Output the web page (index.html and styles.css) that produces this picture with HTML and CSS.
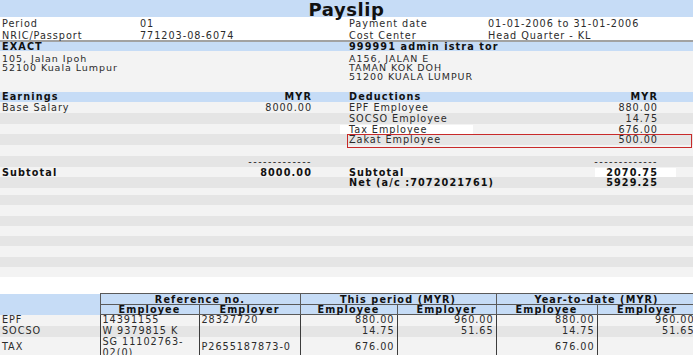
FILE: index.html
```html
<!DOCTYPE html>
<html lang="en">
<head>
<meta charset="utf-8">
<title>Payslip</title>
<link rel="stylesheet" href="styles.css">
</head>
<body>
<div class="slip">
  <div class="title"><span>Payslip</span></div>

  <div class="info">
    <div class="info-row">
      <span>Period</span><span>01</span><span>Payment date</span><span>01-01-2006 to 31-01-2006</span>
    </div>
    <div class="info-row">
      <span>NRIC/Passport</span><span>771203-08-6074</span><span>Cost Center</span><span>Head Quarter - KL</span>
    </div>
  </div>

  <div class="party">
    <div class="party-head"><span>EXACT</span><span>999991 admin istra tor</span></div>
    <div class="party-body">
      <div class="addr"><div>105, Jalan Ipoh</div><div>52100 Kuala Lumpur</div></div>
      <div class="addr"><div>A156, JALAN E</div><div>TAMAN KOK DOH</div><div>51200 KUALA LUMPUR</div></div>
    </div>
  </div>

  <div class="ledger">
    <div class="lrow head">
      <div class="half"><span>Earnings</span><span>MYR</span></div>
      <div class="half"><span>Deductions</span><span>MYR</span></div>
    </div>
    <div class="lrow">
      <div class="half"><span>Base Salary</span><span>8000.00</span></div>
      <div class="half"><span>EPF Employee</span><span>880.00</span></div>
    </div>
    <div class="lrow">
      <div class="half"></div>
      <div class="half"><span>SOCSO Employee</span><span>14.75</span></div>
    </div>
    <div class="lrow">
      <div class="half"></div>
      <div class="half"><span class="patch-label">Tax Employee</span><span>676.00</span></div>
    </div>
    <div class="lrow">
      <div class="half"></div>
      <div class="half marked"><span>Zakat Employee</span><span>500.00</span></div>
    </div>
    <div class="lrow">
      <div class="half"></div>
      <div class="half"></div>
    </div>
    <div class="lrow">
      <div class="half"><span></span><span class="dashes">-------------</span></div>
      <div class="half"><span></span><span class="dashes">-------------</span></div>
    </div>
    <div class="lrow total">
      <div class="half"><span>Subtotal</span><span>8000.00</span></div>
      <div class="half"><span>Subtotal</span><span class="patch-value">2070.75</span></div>
    </div>
    <div class="lrow total">
      <div class="half"></div>
      <div class="half"><span>Net (a/c :7072021761)</span><span>5929.25</span></div>
    </div>
    <div class="lrow filler short"></div>
    <div class="lrow filler"></div>
    <div class="lrow filler"></div>
    <div class="lrow filler"></div>
    <div class="lrow filler"></div>
    <div class="lrow filler"></div>
    <div class="lrow filler"></div>
    <div class="lrow filler"></div>
    <div class="lrow filler"></div>
  </div>

  <div class="contrib-wrap">
    <table class="contrib">
      <colgroup>
        <col class="c-lbl"><col class="c-ref1"><col class="c-ref2"><col class="c-n1"><col class="c-n2"><col class="c-n3"><col class="c-n4">
      </colgroup>
      <thead>
        <tr class="h1">
          <th class="blank" rowspan="2"></th>
          <th colspan="2">Reference no.</th>
          <th colspan="2">This period (MYR)</th>
          <th colspan="2">Year-to-date (MYR)</th>
        </tr>
        <tr class="h2">
          <th>Employee</th><th>Employer</th>
          <th>Employee</th><th>Employer</th>
          <th>Employee</th><th>Employer</th>
        </tr>
      </thead>
      <tbody>
        <tr class="odd">
          <td class="lbl">EPF</td><td>14391155</td><td>28327720</td>
          <td class="num">880.00</td><td class="num">960.00</td><td class="num">880.00</td><td class="num">960.00</td>
        </tr>
        <tr class="even">
          <td class="lbl">SOCSO</td><td>W 9379815 K</td><td></td>
          <td class="num">14.75</td><td class="num">51.65</td><td class="num">14.75</td><td class="num">51.65</td>
        </tr>
        <tr class="odd tall">
          <td class="lbl">TAX</td><td>SG 11102763-<wbr>02(0)</td><td>P2655187873-0</td>
          <td class="num">676.00</td><td class="num"></td><td class="num">676.00</td><td class="num"></td>
        </tr>
      </tbody>
    </table>
  </div>
</div>
</body>
</html>
```

FILE: styles.css
```css
* { box-sizing: border-box; }

html, body {
  margin: 0;
  padding: 0;
  background: #ffffff;
}

body {
  font-family: "DejaVu Sans", Verdana, sans-serif;
  font-size: 9.7px;
  letter-spacing: 0.95px;
  color: #2b2b2b;
  overflow: hidden;
}

.slip {
  width: 693px;
  height: 355px;
  overflow: hidden;
}

/* title */
.title {
  height: 17px;
  background: #c6dcf6;
  text-align: center;
  line-height: 19px;
}
.title span {
  font-size: 18px;
  font-weight: bold;
  letter-spacing: 0.6px;
  color: #111;
}

/* info */
.info-row {
  display: grid;
  grid-template-columns: 138px 209px 139px 1fr;
  height: 11.5px;
  line-height: 13.5px;
  background: #fff;
}
.info-row span { padding-left: 2px; white-space: nowrap; }

/* party */
.party-head {
  display: grid;
  grid-template-columns: 347px 1fr;
  border-top: 2px solid #a2a2a2;
  background: #c6dcf6;
  height: 11px;
  line-height: 9px;
  font-weight: bold;
  letter-spacing: 1.1px;
  color: #111;
}
.party-head span { padding-left: 2px; }

.party-body {
  display: grid;
  grid-template-columns: 347px 1fr;
  background: #f3f3f3;
  height: 41px;
  padding-top: 2.5px;
}
.addr {
  padding-left: 2px;
  display: flex;
  flex-direction: column;
}
.addr div {
  height: 9.3px;
  line-height: 9.3px;
  font-size: 9.5px;
}

/* ledger */
.lrow {
  display: grid;
  grid-template-columns: 347px 346px;
  height: 10.75px;
  line-height: 11.5px;
}
.lrow:nth-child(even) { background: #f3f3f3; }
.lrow:nth-child(odd) { background: #e5e5e5; }
.lrow.head {
  background: #c6dcf6;
  height: 10px;
  line-height: 10.5px;
  font-weight: bold;
  letter-spacing: 1.1px;
  color: #111;
}
.lrow.filler { height: 10.25px; }
.lrow.filler.short { height: 7px; }

.half {
  display: flex;
  justify-content: space-between;
  padding: 0 35px 0 2px;
  white-space: nowrap;
  position: relative;
}

.lrow.total {
  font-weight: bold;
  letter-spacing: 1.1px;
  color: #111;
}

.dashes { letter-spacing: 1.4px; }

.half.marked::after {
  content: "";
  position: absolute;
  top: 0;
  bottom: -2px;
  left: 0;
  right: 1px;
  border: 1.5px solid #c82a2a;
}

.patch-label {
  display: inline-block;
  background: #fff;
  width: 133px;
  margin-left: -9px;
  padding-left: 9px;
  height: 8.5px;
  line-height: 9.5px;
  align-self: center;
}

.patch-value {
  display: inline-block;
  background: #fff;
  padding: 0 18px 0 11px;
  margin-right: -18px;
  height: 9px;
  line-height: 10px;
  align-self: center;
}

/* contributions table */
.contrib-wrap {
  margin-top: 16px;
  width: 693px;
  overflow: hidden;
}

.contrib {
  border-collapse: collapse;
  table-layout: fixed;
  width: 697px;
}
.contrib .c-lbl { width: 100px; }
.contrib .c-ref1 { width: 99px; }
.contrib .c-ref2 { width: 101px; }
.contrib .c-n1 { width: 97px; }
.contrib .c-n2 { width: 99px; }
.contrib .c-n3 { width: 101px; }
.contrib .c-n4 { width: 100px; }

.contrib th,
.contrib td {
  padding: 0 2px;
  vertical-align: middle;
  font-size: 9.7px;
}

.contrib th {
  background: #c6dcf6;
  border: 1px solid #5a5a5a;
  font-weight: bold;
  text-align: center;
  letter-spacing: 1.1px;
  color: #111;
}
.contrib th.blank { border: none; border-right: 1px solid #5a5a5a; }
.contrib tr.h1 th { height: 11px; line-height: 9px; }
.contrib tr.h2 th { height: 10px; line-height: 9px; }

.contrib td {
  border-left: 1px solid #3c3c3c;
  border-right: 1px solid #3c3c3c;
  height: 11px;
  line-height: 10.5px;
  text-align: left;
}
.contrib td.lbl { border-left: none; }
.contrib td.num { text-align: right; }
.contrib tr.odd td { background: #f3f3f3; }
.contrib tr.even td { background: #e5e5e5; }
.contrib tr.tall td { height: 22px; }
```
